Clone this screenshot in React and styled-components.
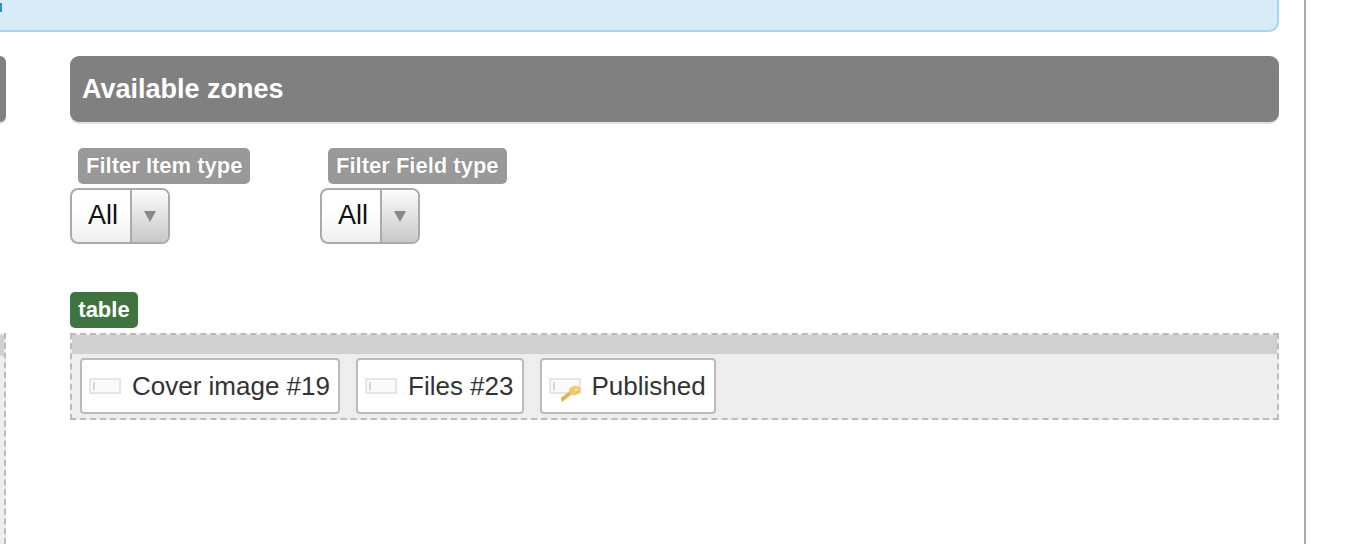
import React from "react";
import styled, { createGlobalStyle } from "styled-components";

const Global = createGlobalStyle`
  html, body { margin: 0; padding: 0; background: #fff; height: 544px; overflow: hidden; }
  body { font-family: "Liberation Sans", Arial, sans-serif; }
`;

const Page = styled.div`
  width: 1304px;
  height: 544px;
  border-right: 2px solid #aaa;
  background: #fff;
  overflow: hidden;
`;

const Notice = styled.div`
  box-sizing: border-box;
  width: 1279px;
  height: 32px;
  background: #d9ebf6;
  border: 2px solid #a0d9f3;
  border-width: 0 2px 2px 0;
  border-bottom-right-radius: 10px;
  padding-top: 3px;
`;

const NoticeMark = styled.div`
  width: 2px;
  height: 9px;
  background: #2f8fc4;
`;

const Columns = styled.div`
  display: grid;
  grid-template-columns: 6px 1209px;
  column-gap: 64px;
  padding-top: 24px;
`;

const SideColumn = styled.div`
  display: flex;
  flex-direction: column;
`;

const SideHeader = styled.div`
  height: 66px;
  background: #808080;
  border-radius: 0 9px 9px 0;
  box-shadow: 0 2px 0 #e0e0e0;
`;

const SideZone = styled.div`
  box-sizing: border-box;
  height: 211px;
  margin-top: 211px;
  background: #eee;
  border-right: 2px dashed #bbb;
`;

const SideZoneBar = styled.div`
  width: 4px;
  height: 21px;
  margin-top: 2px;
  background: #d0d0d0;
`;

const MainColumn = styled.div`
  display: flex;
  flex-direction: column;
`;

const Header = styled.h2`
  box-sizing: border-box;
  height: 66px;
  margin: 0;
  padding: 0 12px;
  display: flex;
  align-items: center;
  background: #808080;
  border-radius: 9px;
  box-shadow: 0 2px 0 #e0e0e0;
  color: #fff;
  font-size: 27px;
  font-weight: 700;
`;

const Filters = styled.div`
  display: flex;
  margin-top: 26px;
`;

const Filter = styled.div`
  width: 250px;
  display: flex;
  flex-direction: column;
  align-items: flex-start;
`;

const FilterLabel = styled.label`
  box-sizing: border-box;
  height: 36px;
  margin-left: 8px;
  padding: 0 8px;
  display: flex;
  align-items: center;
  background: #999;
  border-radius: 5px;
  color: #fff;
  font-size: 22px;
  font-weight: 700;
  text-shadow: 0 0 1px #666;
`;

const Select = styled.div`
  box-sizing: border-box;
  width: 100px;
  height: 56px;
  margin-top: 4px;
  display: flex;
  border: 2px solid #aaa;
  border-radius: 8px;
  overflow: hidden;
  background: linear-gradient(#fff 40%, #efefef);
`;

const SelectValue = styled.span`
  width: 58px;
  padding-left: 16px;
  box-sizing: border-box;
  line-height: 50px;
  font-size: 27px;
  color: #111;
`;

const SelectArrow = styled.span`
  flex: 1;
  display: flex;
  align-items: center;
  justify-content: center;
  border-left: 2px solid #aaa;
  background: linear-gradient(#fcfcfc, #c8c8c8);

  &::after {
    content: "";
    width: 0;
    height: 0;
    border-left: 6px solid transparent;
    border-right: 6px solid transparent;
    border-top: 11px solid #888;
  }
`;

const TypeTag = styled.div`
  box-sizing: border-box;
  width: 68px;
  height: 36px;
  margin-top: 48px;
  display: flex;
  align-items: center;
  justify-content: center;
  background: #3f733f;
  border-radius: 5px;
  color: #fff;
  font-size: 22px;
  font-weight: 700;
`;

const Zone = styled.div`
  box-sizing: border-box;
  height: 87px;
  margin-top: 5px;
  border: 2px dashed #bbb;
  background: #eee;
`;

const ZoneBar = styled.div`
  height: 19px;
  background: #d0d0d0;
`;

const Items = styled.div`
  display: flex;
  gap: 16px;
  padding: 4px 8px 0;
`;

const Item = styled.div`
  box-sizing: border-box;
  height: 56px;
  padding: 0 8px 0 6px;
  display: flex;
  align-items: center;
  gap: 10px;
  background: #fff;
  border: 2px solid #bbb;
  border-radius: 4px;
  color: #333;
  font-size: 26px;
  white-space: nowrap;
`;

const FieldIcon = ({ withKey }) => (
  <svg width="34" height="34" viewBox="0 0 34 34" style={{ flexShrink: 0 }}>
    <rect x="1" y="9" width="32" height="16" fill="#e6e6e6" />
    <rect x="3" y="11" width="28" height="12" fill="#fafafa" />
    <rect x="5" y="13" width="2" height="8" fill="#d4d4d4" />
    {withKey && (
      <g>
        <path d="M14 33 L13 29 L22 22 L23 25 Z" fill="#dfa23c" />
        <path d="M21 24 C20 19 25 16 29 17 C33 18 34 22 31 24 C28 27 23 27 21 24 Z" fill="#f3c566" />
        <circle cx="28" cy="20.5" r="1.6" fill="#fbe6a8" />
        <path d="M13 29 L15 32 L23 26 L21 24 Z" fill="#eab24e" />
      </g>
    )}
  </svg>
);

const Field = ({ label, withKey }) => (
  <Item>
    <FieldIcon withKey={withKey} />
    {label}
  </Item>
);

const FilterBox = ({ label }) => (
  <Filter>
    <FilterLabel>{label}</FilterLabel>
    <Select>
      <SelectValue>All</SelectValue>
      <SelectArrow />
    </Select>
  </Filter>
);

export default function App() {
  return (
    <Page>
      <Global />
      <Notice>
        <NoticeMark />
      </Notice>
      <Columns>
        <SideColumn>
          <SideHeader />
          <SideZone>
            <SideZoneBar />
          </SideZone>
        </SideColumn>
        <MainColumn>
          <Header>Available zones</Header>
          <Filters>
            <FilterBox label="Filter Item type" />
            <FilterBox label="Filter Field type" />
          </Filters>
          <TypeTag>table</TypeTag>
          <Zone>
            <ZoneBar />
            <Items>
              <Field label="Cover image #19" />
              <Field label="Files #23" />
              <Field label="Published" withKey />
            </Items>
          </Zone>
        </MainColumn>
      </Columns>
    </Page>
  );
}
